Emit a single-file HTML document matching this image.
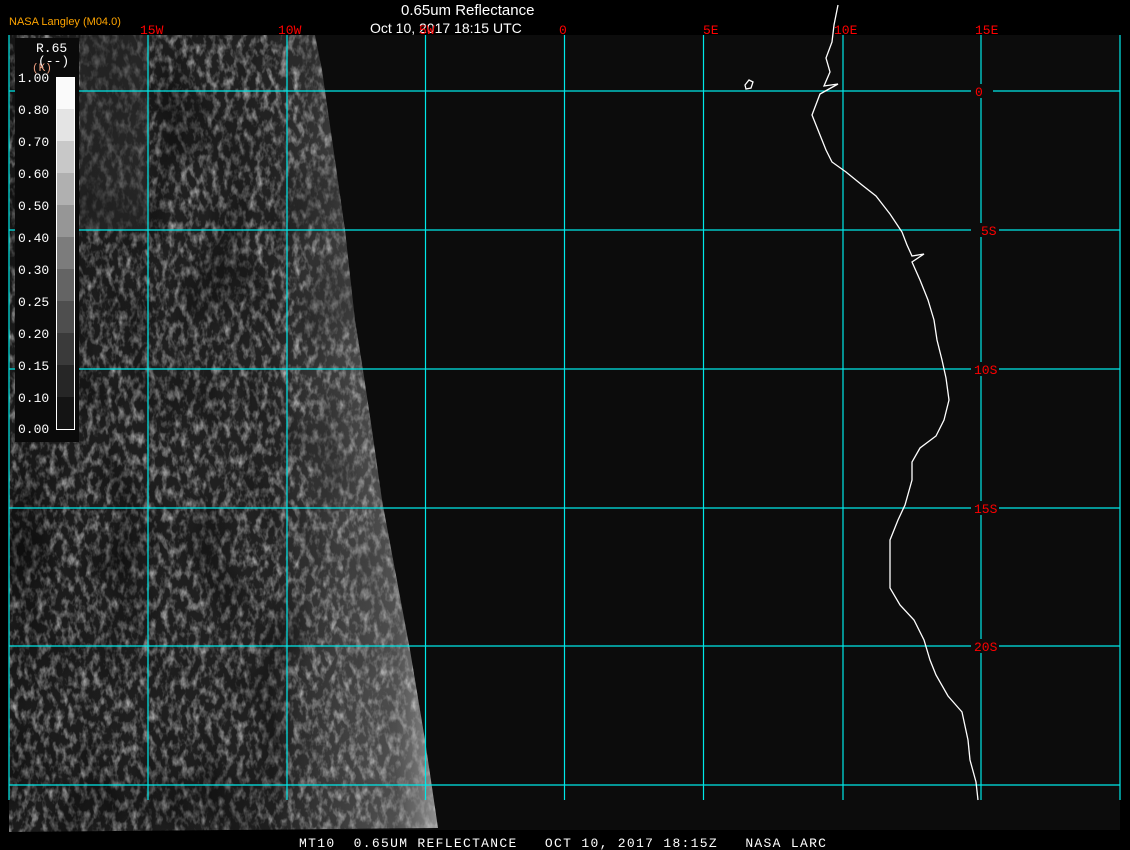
<!DOCTYPE html>
<html><head><meta charset="utf-8"><style>
html,body{margin:0;padding:0;background:#000;width:1130px;height:850px;overflow:hidden}
svg{display:block}
</style></head><body>
<svg width="1130" height="850" viewBox="0 0 1130 850" xmlns="http://www.w3.org/2000/svg">
<defs>
<filter id="tex" x="0" y="0" width="100%" height="100%">
<feTurbulence type="fractalNoise" baseFrequency="0.16 0.09" numOctaves="3" seed="7" result="n"/>
<feColorMatrix in="n" type="matrix" values="0 0 0 0 1  0 0 0 0 1  0 0 0 0 1  2.2 0 0 0 -0.95"/>
</filter>
<filter id="tex2" x="0" y="0" width="100%" height="100%">
<feTurbulence type="fractalNoise" baseFrequency="0.02 0.012" numOctaves="2" seed="3" result="n"/>
<feColorMatrix in="n" type="matrix" values="0 0 0 0 0  0 0 0 0 0  0 0 0 0 0  2 0 0 0 -0.9"/>
</filter>
<linearGradient id="edge" x1="0" x2="1" y1="0" y2="0">
<stop offset="0" stop-color="#fff" stop-opacity="0"/>
<stop offset="0.6" stop-color="#fff" stop-opacity="0.05"/>
<stop offset="0.88" stop-color="#ddd" stop-opacity="0.4"/>
<stop offset="1" stop-color="#fff" stop-opacity="0.9"/>
</linearGradient>
<clipPath id="cc"><polygon points="9,35 315,35 322,70 335,160 345,230 355,320 363,370 372,430 382,500 395,570 410,650 425,740 438,828 9,832"/></clipPath>
</defs>
<rect x="9" y="35" width="1111" height="795" fill="#0c0c0c"/>
<g clip-path="url(#cc)">
<rect x="9" y="35" width="440" height="800" fill="#1a1a1a"/>
<rect x="9" y="35" width="440" height="800" filter="url(#tex)" opacity="0.6"/>
<rect x="9" y="35" width="440" height="800" filter="url(#tex2)" opacity="0.6"/>
<rect x="80" y="35" width="70" height="195" fill="#2a2a2a" opacity="0.5"/>
<rect x="9" y="35" width="440" height="800" fill="url(#edge)" opacity="0.7"/>
</g>
<g stroke="#00e8e8" stroke-width="1.2" fill="none">
<line x1="9" y1="35" x2="9" y2="800"/><line x1="148" y1="35" x2="148" y2="800"/><line x1="287" y1="35" x2="287" y2="800"/><line x1="425.5" y1="35" x2="425.5" y2="800"/><line x1="564.5" y1="35" x2="564.5" y2="800"/><line x1="703.5" y1="35" x2="703.5" y2="800"/><line x1="843" y1="35" x2="843" y2="800"/><line x1="981" y1="35" x2="981" y2="800"/><line x1="1120" y1="35" x2="1120" y2="800"/>
<line x1="9" y1="91" x2="1120" y2="91"/><line x1="9" y1="230" x2="1120" y2="230"/><line x1="9" y1="369" x2="1120" y2="369"/><line x1="9" y1="508" x2="1120" y2="508"/><line x1="9" y1="646" x2="1120" y2="646"/><line x1="9" y1="785" x2="1120" y2="785"/>
</g>
<g fill="#0c0c0c">
<rect x="971" y="84" width="22" height="14"/><rect x="971" y="223" width="28" height="14"/><rect x="971" y="362" width="28" height="14"/><rect x="971" y="501" width="28" height="14"/><rect x="971" y="639" width="28" height="14"/>
</g>
<g fill="none" stroke="#fff" stroke-width="1.3">
<polyline points="838,5 834,25 832,42 826,58 830,72 824,86 838,84 820,94 812,115 818,130 826,150 832,162 846,172 862,185 876,196 890,214 902,232 907,245 912,256 924,254 912,262 920,280 928,300 934,320 937,340 942,360 946,378 949,400 944,420 936,436 920,448 912,462 912,480 905,505 898,520 890,540 890,560 890,588 900,605 914,620 924,640 930,660 936,675 948,696 962,712 968,740 970,760 976,782 978,800"/>
<path d="M745,85 l4,-5 4,2 -2,6 -5,1z"/>
</g>
<rect x="15" y="38" width="64" height="404" fill="#0a0a0a"/>
<g fill="#fff" font-family="Liberation Mono,monospace" font-size="13">
<text x="36" y="52">R.65</text><text x="38" y="65">(--)</text>
</g>
<text x="32" y="71" fill="#f0a080" font-family="Liberation Mono,monospace" font-size="11">(K)</text>
<g>
<rect x="56" y="77" width="19" height="32" fill="#fafafa"/>
<rect x="56" y="109" width="19" height="32" fill="#e4e4e4"/>
<rect x="56" y="141" width="19" height="32" fill="#c8c8c8"/>
<rect x="56" y="173" width="19" height="32" fill="#b0b0b0"/>
<rect x="56" y="205" width="19" height="32" fill="#969696"/>
<rect x="56" y="237" width="19" height="32" fill="#7c7c7c"/>
<rect x="56" y="269" width="19" height="32" fill="#646464"/>
<rect x="56" y="301" width="19" height="32" fill="#4e4e4e"/>
<rect x="56" y="333" width="19" height="32" fill="#3a3a3a"/>
<rect x="56" y="365" width="19" height="32" fill="#262626"/>
<rect x="56" y="397" width="19" height="33" fill="#141414"/>
<rect x="56.5" y="77.5" width="18" height="352" fill="none" stroke="#fff"/>
</g>
<g fill="#fff" font-family="Liberation Mono,monospace" font-size="13">
<text x="18" y="82">1.00</text><text x="18" y="114">0.80</text><text x="18" y="146">0.70</text><text x="18" y="178">0.60</text><text x="18" y="210">0.50</text><text x="18" y="242">0.40</text><text x="18" y="274">0.30</text><text x="18" y="306">0.25</text><text x="18" y="338">0.20</text><text x="18" y="370">0.15</text><text x="18" y="402">0.10</text><text x="18" y="433">0.00</text>
</g>
<text x="9" y="25" fill="#ffa500" font-family="Liberation Sans,sans-serif" font-size="11">NASA Langley (M04.0)</text>
<text x="401" y="15" fill="#fff" font-family="Liberation Sans,sans-serif" font-size="15">0.65um Reflectance</text>
<text x="370" y="33" fill="#fff" font-family="Liberation Sans,sans-serif" font-size="14">Oct 10, 2017 18:15 UTC</text>
<g fill="#f00" font-family="Liberation Mono,monospace" font-size="13">
<text x="140" y="34">15W</text><text x="278" y="34">10W</text><text x="419" y="34">5W</text><text x="559" y="34">0</text><text x="703" y="34">5E</text><text x="834" y="34">10E</text><text x="975" y="34">15E</text>
<text x="975" y="96">0</text><text x="981" y="235">5S</text><text x="974" y="374">10S</text><text x="974" y="513">15S</text><text x="974" y="651">20S</text>
</g>
<text x="299" y="847" fill="#fff" font-family="Liberation Mono,monospace" font-size="13" textLength="527" lengthAdjust="spacing">MT10&#160;&#160;0.65UM&#160;REFLECTANCE&#160;&#160;&#160;OCT&#160;10,&#160;2017&#160;18:15Z&#160;&#160;&#160;NASA&#160;LARC</text>
</svg>
</body></html>
